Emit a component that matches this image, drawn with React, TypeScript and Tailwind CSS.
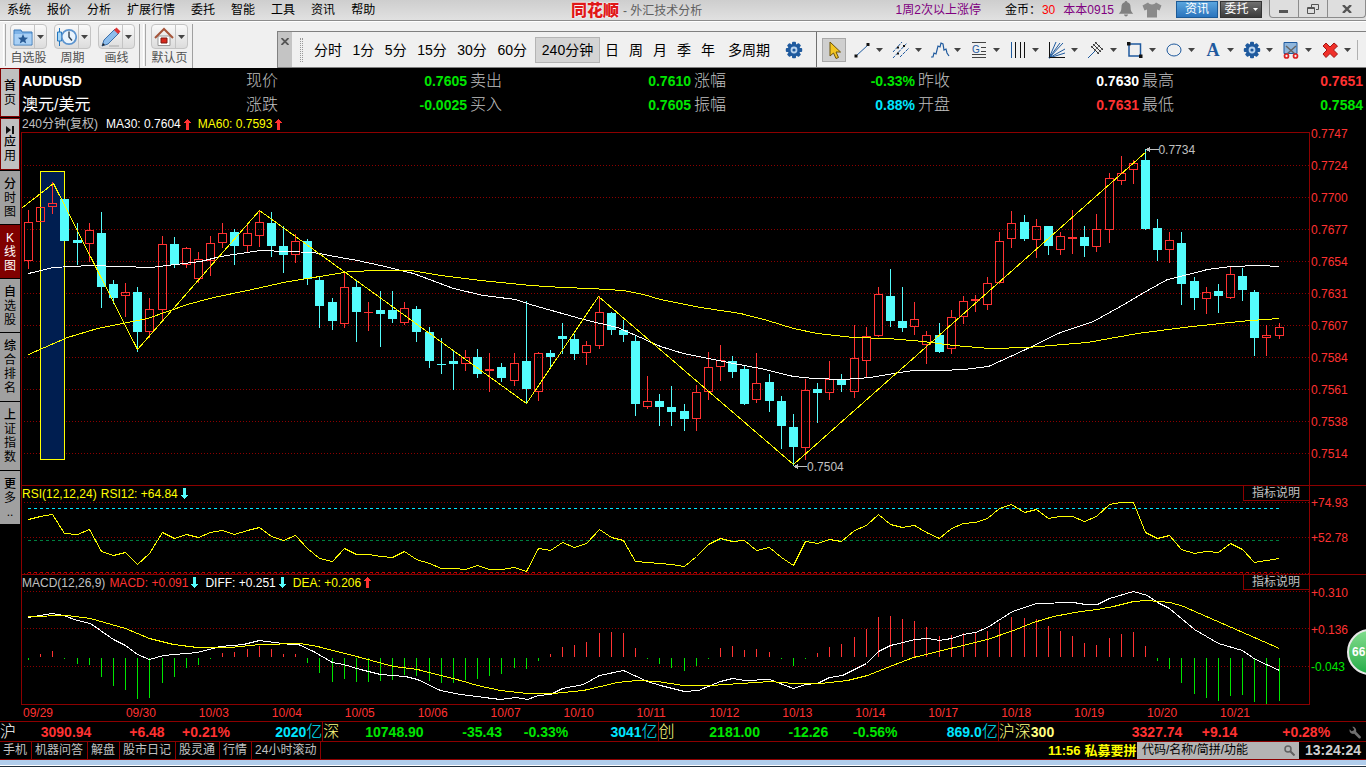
import type { ReactNode } from 'react';

// high, body top, body bottom, low, rising (1) or falling (0)
const CANDLES = [
  [78, 90, 129, 137, 1], [75, 75, 90, 90, 1], [50, 71, 75, 82, 1], [67, 67, 109, 109, 0], [91, 108, 111, 133, 0],
  [91, 98, 112, 130, 1], [80, 101, 155, 176, 0], [148, 152, 166, 172, 0], [151, 160, 164, 185, 1], [155, 160, 200, 220, 0],
  [166, 177, 200, 206, 1], [104, 112, 178, 188, 1], [105, 112, 133, 136, 0], [115, 116, 133, 136, 1], [120, 127, 147, 151, 1],
  [104, 111, 129, 144, 1], [91, 101, 111, 116, 1], [97, 100, 114, 133, 0], [93, 101, 114, 121, 1], [78, 90, 104, 115, 1],
  [80, 91, 114, 125, 0], [94, 114, 123, 141, 0], [102, 109, 123, 131, 1], [107, 109, 147, 153, 0], [144, 148, 174, 196, 0],
  [166, 170, 189, 198, 0], [140, 155, 192, 196, 1], [148, 155, 180, 210, 0], [170, 180, 181, 199, 1], [159, 178, 182, 215, 0],
  [159, 178, 187, 191, 0], [170, 176, 191, 193, 1], [174, 177, 200, 210, 0], [195, 200, 229, 236, 0], [206, 232, 233, 242, 0],
  [218, 229, 232, 258, 0], [218, 225, 232, 239, 1], [217, 225, 242, 246, 0], [221, 237, 239, 260, 1], [231, 235, 246, 250, 0],
  [221, 231, 249, 254, 1], [169, 229, 257, 271, 0], [220, 221, 260, 269, 1], [218, 221, 225, 236, 0], [191, 204, 207, 222, 0],
  [202, 207, 222, 228, 0], [209, 213, 221, 233, 1], [164, 180, 214, 217, 1], [180, 181, 198, 203, 0], [188, 198, 203, 210, 0],
  [204, 209, 272, 284, 0], [244, 269, 275, 277, 1], [262, 269, 275, 294, 0], [254, 275, 280, 294, 0], [272, 279, 287, 299, 0],
  [253, 260, 287, 299, 1], [220, 235, 260, 268, 1], [213, 228, 235, 249, 1], [224, 229, 240, 246, 0], [234, 237, 272, 273, 0],
  [221, 251, 268, 271, 1], [242, 250, 269, 280, 0], [264, 269, 294, 317, 0], [282, 295, 315, 334, 0], [247, 258, 316, 328, 1],
  [251, 257, 261, 291, 0], [229, 247, 261, 268, 1], [242, 247, 253, 260, 0], [193, 226, 260, 266, 1], [195, 204, 229, 245, 1],
  [155, 162, 204, 205, 1], [137, 164, 189, 195, 0], [155, 189, 196, 200, 0], [170, 187, 195, 203, 1], [199, 203, 213, 232, 1],
  [191, 203, 220, 221, 0], [178, 185, 217, 222, 1], [164, 169, 185, 192, 1], [163, 167, 169, 180, 1], [145, 151, 173, 178, 1],
  [100, 109, 151, 152, 1], [79, 91, 107, 116, 1], [83, 90, 107, 109, 0], [87, 94, 108, 126, 1], [94, 94, 114, 123, 0],
  [100, 104, 118, 123, 1], [78, 105, 107, 122, 1], [94, 105, 114, 125, 0], [82, 97, 115, 120, 1], [41, 46, 98, 111, 1],
  [24, 41, 49, 53, 1], [28, 31, 38, 52, 1], [17, 28, 97, 98, 0], [87, 96, 118, 129, 0], [100, 108, 118, 131, 1],
  [100, 111, 152, 173, 0], [145, 149, 166, 178, 0], [155, 160, 167, 182, 1], [152, 159, 164, 181, 0], [134, 142, 166, 167, 1],
  [136, 144, 158, 169, 0], [158, 160, 206, 224, 0], [193, 203, 206, 224, 1], [191, 195, 204, 207, 1],
];

const MA30 =
  '6,141 31,135 68,133 128,135 178,129 198,124 238,118 291,120 318,125 335,128 358,133 391,141 431,156 461,163 493,167 508,172 561,187 595,195 618,205 638,214 661,221 711,231 738,236 771,244 791,246 821,247 848,245 871,241 891,238 918,238 942,237 966,234 1001,218 1038,200 1071,189 1098,174 1125,158 1145,147 1158,144 1185,137 1208,134 1238,133 1257,134';
const MA60 =
  '6,222 45,205 75,196 125,186 165,172 191,165 225,158 261,150 291,145 328,139 355,138 388,138 418,143 458,148 508,153 541,155 568,156 601,158 621,162 638,167 678,175 718,181 745,188 771,196 795,201 831,205 865,206 901,209 931,213 968,216 1005,215 1065,210 1115,201 1161,195 1198,191 1228,188 1257,186';
const ZIGZAG = '0,75 31,51 115,217 237,78 504,271 576,164 771,332 1124,19';

const RSI = [
  17, 14, 12, 31, 32, 27, 49, 53, 50, 62, 51, 30, 36, 32, 35, 30, 28, 32, 28, 25, 34, 38, 33, 46, 56, 59, 46, 52, 52, 54,
  55, 49, 57, 61, 66, 66, 67, 63, 67, 67, 65, 69, 46, 48, 40, 45, 41, 27, 35, 38, 59, 60, 61, 62, 64, 54, 42, 36, 39, 38,
  48, 45, 55, 63, 39, 41, 37, 39, 28, 23, 12, 22, 25, 23, 30, 36, 26, 21, 20, 16, 6, 2, 10, 7, 16, 14, 14, 19, 14, 2, 0,
  0, 30, 36, 33, 47, 51, 49, 50, 41, 47, 60, 58, 56,
];

const MACD = [
  -2, 3, 6, -1, -6, -7, -19, -28, -32, -41, -40, -25, -19, -10, -7, -1, 4, 5, 8, 11, 8, 3, 3, -5, -15, -24, -21, -24, -24,
  -23, -22, -17, -18, -23, -25, -25, -22, -21, -18, -16, -10, -11, -3, 3, 10, 12, 15, 24, 25, 24, 9, -1, -6, -10, -13, -8,
  -1, 9, 11, 7, 8, 5, -1, -8, -1, 4, 10, 13, 20, 28, 40, 41, 38, 36, 30, 21, 22, 24, 24, 26, 34, 40, 39, 38, 31, 26, 21,
  14, 12, 19, 23, 25, 11, -3, -11, -25, -36, -40, -43, -38, -37, -44, -46, -43,
];
const DIFF =
  '6,26 30,22 41,24 55,29 68,32 78,39 91,48 103,54 115,63 127,68 141,64 175,61 198,55 221,53 237,49 268,53 276,53 291,60 310,71 321,73 338,78 358,83 383,85 395,88 418,99 438,103 478,108 493,106 505,108 516,104 528,103 540,97 561,93 577,84 601,79 625,90 638,94 662,100 676,99 698,90 710,87 723,89 747,88 771,97 783,93 795,92 807,86 820,84 844,72 856,60 868,54 893,48 905,47 917,49 929,47 941,43 953,41 965,36 990,20 1014,12 1051,11 1063,13 1075,13 1087,7 1111,0 1125,4 1135,11 1147,17 1172,38 1196,52 1220,59 1233,68 1257,79';
const DEA =
  '6,25 45,24 68,27 103,37 127,47 151,53 175,56 208,56 238,53 278,52 295,55 338,66 371,75 395,78 438,89 455,94 478,99 505,102 531,102 561,99 595,91 615,89 635,90 661,94 688,94 718,92 748,90 771,92 798,92 825,89 845,84 865,76 891,66 928,57 965,48 991,39 1011,31 1031,25 1058,20 1075,18 1091,15 1111,10 1125,9 1148,11 1161,15 1257,57';

const RED = '#ff3232';
const CYAN = '#54fcfc';

const barX = (i: number) => Math.floor(6.45 + 12.142 * i);

const MENUS = ['系统', '报价', '分析', '扩展行情', '委托', '智能', '工具', '资讯', '帮助'];
const PRICES = ['0.7747', '0.7724', '0.7700', '0.7677', '0.7654', '0.7631', '0.7607', '0.7584', '0.7561', '0.7538', '0.7514'];
const DATES = [
  '09/30', '10/03', '10/04', '10/05', '10/06', '10/07', '10/10', '10/11', '10/12', '10/13', '10/14', '10/17', '10/18',
  '10/19', '10/20',
];

const QUOTES = [
  { label: '现价', value: '0.7605', color: 'text-[#00e600]' },
  { label: '涨跌', value: '-0.0025', color: 'text-[#00e600]' },
  { label: '卖出', value: '0.7610', color: 'text-[#00e600]' },
  { label: '买入', value: '0.7605', color: 'text-[#00e600]' },
  { label: '涨幅', value: '-0.33%', color: 'text-[#00e600]' },
  { label: '振幅', value: '0.88%', color: 'text-[#00e6ff]' },
  { label: '昨收', value: '0.7630', color: 'text-white' },
  { label: '开盘', value: '0.7631', color: 'text-[#ff3232]' },
  { label: '最高', value: '0.7651', color: 'text-[#ff3232]' },
  { label: '最低', value: '0.7584', color: 'text-[#00e600]' },
];

const INDEXES = [
  {
    name: '沪', nameColor: 'text-white', color: 'text-[#ff3232]', values: ['3090.94', '+6.48', '+0.21%'], volume: '2020',
    grow: 'flex-[323_1_0%] border-r', cols: 'grid-cols-[91fr_73fr_65fr_92fr]',
  },
  {
    name: '深', nameColor: 'text-[#ffff80]', color: 'text-[#00e600]', values: ['10748.90', '-35.43', '-0.33%'], volume: '3041',
    grow: 'flex-[335_1_0%] border-r', cols: 'grid-cols-[100fr_78fr_66fr_89fr]',
  },
  {
    name: '创', nameColor: 'text-[#ffff80]', color: 'text-[#00e600]', values: ['2181.00', '-12.26', '-0.56%'], volume: '869.0',
    grow: 'flex-[340_1_0%] border-r', cols: 'grid-cols-[101fr_68fr_69fr_100fr]',
  },
];

function Icon({ children, className = 'size-5' }: { children: ReactNode; className?: string }) {
  return (
    <svg viewBox="0 0 20 20" fill="none" className={`shrink-0 ${className}`} aria-hidden="true">
      {children}
    </svg>
  );
}

function Caret() {
  return (
    <svg viewBox="0 0 7 4" className="h-1 w-[7px] shrink-0" aria-hidden="true">
      <path d="M0 0h7L3.5 4z" fill="#444" />
    </svg>
  );
}

function Gear() {
  return (
    <Icon>
      <g fill="#1f5a9e">
        <circle cx="10" cy="10" r="6.3" />
        {[0, 45, 90, 135].map((a) => (
          <rect key={a} x="8" y="1.8" width="4" height="16.4" rx="1" transform={`rotate(${a} 10 10)`} />
        ))}
      </g>
      <circle cx="10" cy="10" r="3.4" fill="#b9d3ee" />
      <circle cx="10" cy="10" r="1.6" fill="#1f5a9e" />
    </Icon>
  );
}

function Arrow({ up }: { up?: boolean }) {
  return (
    <svg viewBox="0 0 7 11" className="mx-[3px] h-[11px] w-[7px] shrink-0" shapeRendering="crispEdges" aria-hidden="true">
      {up ? (
        <path d="M3 0h1v1h1v1h1v1h1v1H5v7H2V4H0V3h1V2h1V1h1z" fill={RED} />
      ) : (
        <path d="M2 0h3v7h2v1H6v1H5v1H4v1H3v-1H2V9H1V8H0V7h2z" fill={CYAN} />
      )}
    </svg>
  );
}

function TitleBar() {
  return (
    <header className="flex h-[22px] items-start border-b border-white bg-linear-to-b from-[#cecece] to-[#e2e2e2] shadow-[inset_0_-1px_0_#8c8c8c]">
      <nav className="flex w-[571px] shrink-0 gap-4 pl-[7px] leading-[21px] text-black">
        {MENUS.map((m) => (
          <button key={m}>{m}</button>
        ))}
      </nav>
      <h1 className="flex items-center leading-[20px] text-[#606060]">
        <span className="text-base leading-[20px] font-black text-[#e01818] [text-shadow:0_0_2px_#fff,0_0_2px_#fff]">同花顺</span>
        <span className="pl-1 leading-[22px]">- 外汇技术分析</span>
      </h1>
      <div className="ml-auto flex items-start leading-[21px] text-[#800080]">
        <a href="#promo" className="mr-6">1周2次以上涨停</a>
        <span className="mr-px text-black">金币：</span>
        <span className="mr-2 text-[#ff0000]">30</span>
        <a href="#user" className="mr-1">本本0915</a>
        <button aria-label="提醒" className="mr-2">
          <Icon className="mt-px size-4">
            <path d="M10 0c1 0 1.700.700 1.700 1.700 3 .8 4 3.300 4 6.300 0 4 1.300 5.500 3.300 8H1c2-2.500 3.300-4 3.300-8 0-3 1-5.500 4-6.300C8.300.700 9 0 10 0zM7.500 17h5c0 3-5 3-5 0z" fill="#808080" />
          </Icon>
        </button>
        <button aria-label="换肤" className="mr-[14px]">
          <Icon className="size-5">
            <path d="M6 2.500c1.500 2.500 6.500 2.500 8 0l5.500 3-2 5-2.500-1v8H5v-8l-2.500 1-2-5z" fill="#8a8a8a" />
          </Icon>
        </button>
        <button className="mt-px mr-[2px] h-[17px] w-[42px] border border-[#1c5a96] bg-linear-to-b from-[#5aa5de] to-[#2a74bd] leading-[15px] text-white">资讯</button>
        <button className="mt-px mr-[7px] flex h-[17px] w-[42px] items-center justify-center gap-1 border border-[#333] bg-linear-to-b from-[#707070] to-[#3c3c3c] leading-[15px] text-white">
          委托
          <svg viewBox="0 0 5 3" className="h-[3px] w-[5px]" aria-hidden="true"><path d="M0 0h5L2.500 3z" fill="#fff" /></svg>
        </button>
        <div className="flex h-[18px] w-[97px] divide-x divide-[#8c8c8c] rounded-b-sm border border-t-0 border-[#8c8c8c] bg-[#dedede]">
          <button aria-label="最小化" className="flex flex-1 items-center justify-center">
            <svg viewBox="0 0 10 10" className="size-[10px]"><path d="M0 6h9v3H0z" fill="#555" /></svg>
          </button>
          <button aria-label="还原" className="flex flex-1 items-center justify-center">
            <svg viewBox="0 0 12 10" className="h-[10px] w-3" fill="none" stroke="#555"><path d="M4.500 3V.500h7v5H9M.500 3.500h7v6h-7zM.500 4.500h7" /></svg>
          </button>
          <button aria-label="关闭" className="flex flex-[1.3] items-center justify-center">
            <svg viewBox="0 0 10 8" className="h-2 w-[10px]"><path d="M1 0l8 8M9 0L1 8" stroke="#555" strokeWidth="2.400" /></svg>
          </button>
        </div>
      </div>
    </header>
  );
}

const SHORTCUTS = [
  {
    label: '自选股',
    icon: (
      <Icon>
        <path d="M1 3h7l1 2h10v13H1z" fill="#7fb4e8" stroke="#3a78b8" />
        <path d="M1.500 7h17v10.500h-17z" fill="#a9d0f5" />
        <path d="M10 7l1.500 3.500 3.500.200-2.700 2.300.900 3.500-3.200-2-3.200 2 .900-3.500L5 10.700l3.500-.200z" fill="#285a94" />
      </Icon>
    ),
  },
  {
    label: '周期',
    icon: (
      <Icon>
        <path d="M2.500 1v18" stroke="#2277c0" />
        <path d="M.500 5h4v9h-4z" fill="#a9d6f5" stroke="#2277c0" />
        <circle cx="12" cy="10" r="7.200" fill="#eaf4fd" stroke="#5c94cf" strokeWidth="1.700" />
        <path d="M12 4.500V10l3 3.500" stroke="#345" strokeWidth="1.400" />
      </Icon>
    ),
  },
  {
    label: '画线',
    icon: (
      <Icon>
        <path d="M1 19l2-6L14 2l4 4L7 17z" fill="#8dbdec" stroke="#3c6fa8" />
        <path d="M13 3l2.500-2.500 4 4L17 7z" fill="#d33" />
        <path d="M1 19l1-3 2 2z" fill="#222" />
        <path d="M8 19h10" stroke="#bbb" strokeWidth="1.500" />
      </Icon>
    ),
  },
];

function Shortcut({ label, icon }: { label: string; icon: ReactNode }) {
  return (
    <div className="flex w-[37px] flex-col items-center text-[#505050]">
      <button aria-label={label} className="flex h-[25px] w-[37px] items-center rounded-sm border border-[#c4c4c4] bg-linear-to-b from-[#fafafa] to-[#dcdcdc]">
        <span className="flex flex-1 justify-center">{icon}</span>
        <span className="flex h-full w-3 items-center justify-center border-l border-[#c4c4c4]"><Caret /></span>
      </button>
      <span className="leading-[18px] whitespace-nowrap">{label}</span>
    </div>
  );
}

const DRAW_TOOLS = [
  {
    label: '线段',
    icon: <><path d="M4 16L16 5" stroke="#1f5a9e" /><path d="M2.500 14.500h3v3h-3zM14.500 3h3v3h-3z" fill="#111" /></>,
  },
  {
    label: '平行线',
    icon: <><path d="M2 12L11 2M2 18L16 3M9 17l9-9" stroke="#1f5a9e" strokeDasharray="3 1" /><path d="M6 12.500h2v2H6zM12 5h2v2h-2zM6 6.500h2v2H6z" fill="#111" /></>,
  },
  { label: '波浪', icon: <path d="M1 17h2l1-4 2 1 2-8 2 1 1-4 2 1 1 6 2-1 1 4 2 3" stroke="#1f5a9e" strokeWidth="1.200" /> },
  {
    label: '黄金分割',
    icon: <><path d="M3 2.500h14M12 7.500h5M12 11.500h5M3 14.500h14M3 17.500h14" stroke="#444" /><text x="3" y="13" fontSize="10" fill="#1f5a9e" fontFamily="Liberation Sans">G</text></>,
  },
  { label: '周期线', icon: <><path d="M3.500 2v16" stroke="#1f5a9e" /><path d="M7.500 2v16M12.500 2v16M16.500 2v16" stroke="#111" /></> },
  { label: '江恩角度', icon: <><path d="M2 18L9 2M2 18L16 3M2 18L18 9M2 18l11-15M2 18l16-5" stroke="#1f5a9e" /><path d="M2.500 2v15.500H18" stroke="#111" /></> },
  { label: '音叉', icon: <><path d="M2 18l7-7" stroke="#1f5a9e" /><path d="M5 6l8 8M7 4l8 8M9 2l8 8" stroke="#333" /><path d="M5 8l6-6M8 11l6-6M11 14l6-6" stroke="#777" /></> },
  { label: '矩形', icon: <><path d="M4 4h11.500v12H4z" stroke="#1f5a9e" strokeWidth="1.500" /><path d="M2 2h3.500v3.500H2zM14 14.500h3.500V18H14z" fill="#111" /></> },
  { label: '圆', icon: <ellipse cx="10" cy="10" rx="7" ry="6" stroke="#1f5a9e" /> },
];

function DrawTool({ label, children }: { label: string; children: ReactNode }) {
  return (
    <button aria-label={label} className="flex w-[39px] items-center gap-1 pl-[2px]">
      {children}
      <Caret />
    </button>
  );
}

function Toolbar() {
  const periods = ['分时', '1分', '5分', '15分', '30分', '60分'];
  return (
    <div className="flex h-[46px] items-start bg-[#f0f0f0] pt-[2px]">
      <div className="flex h-[44px] gap-[7px] border-r border-[#a0a0a0] pr-1 pl-[3px]">
        <i className="mr-[-3px] h-[42px] w-[3px] border-x border-x-[#a8a8a8] border-l-white" />
        {SHORTCUTS.map((s) => (
          <Shortcut key={s.label} {...s} />
        ))}
      </div>
      <div className="flex h-[44px] gap-[5px] border-r border-[#a0a0a0] pr-1 pl-[3px]">
        <i className="h-[42px] w-[3px] border-x border-x-[#a8a8a8] border-l-white" />
        <Shortcut
          label="默认页"
          icon={
            <Icon>
              <path d="M4 9h12v9.500H4z" fill="#fff" stroke="#999" />
              <path d="M1 11L10 2l9 9" stroke="#a5553a" strokeWidth="2" />
              <path d="M7 11h6v5H7z" fill="#d8281c" stroke="#7d1a12" />
            </Icon>
          }
        />
      </div>
      <div className="mt-[7px] ml-auto flex h-[37px] w-[1089px] shrink-0 items-center border border-r-0 border-[#808080] text-sm text-black">
        <button aria-label="收起" className="flex h-full w-[14px] justify-center bg-[#c4c4c4] pt-[6px]">
          <svg viewBox="0 0 8 7" className="h-[7px] w-2"><path d="M.500 0l7 7M7.500 0l-7 7" stroke="#555" strokeWidth="1.800" /></svg>
        </button>
        <i className="mx-2 h-6 w-[3px] border-x border-dotted border-[#999]" />
        <div className="flex w-[216px] justify-between pl-[3px]">
          {periods.map((p) => (
            <button key={p}>{p}</button>
          ))}
        </div>
        <button className="mr-[5px] ml-[8px] h-[26px] w-[65px] border border-[#b4b4b4] bg-[#d4d4d4]">240分钟</button>
        {['日', '周', '月', '季', '年'].map((p) => (
          <button key={p} className="w-6 text-left">{p}</button>
        ))}
        <button className="ml-[3px]">多周期</button>
        <button aria-label="周期设置" className="ml-[14px]"><Gear /></button>
        <div className="ml-auto flex h-full w-[550px] items-center border-l border-[#707070] pl-[5px]">
          <button aria-label="选择" className="mr-1 flex size-6 items-center justify-center border border-[#a8a8a8] bg-[#cfcfcf]">
            <Icon>
              <path d="M6 2v14l3.500-3 2.500 5.500 2.500-1-2.500-5.500h4.500z" fill="#f3c623" stroke="#6b5208" />
            </Icon>
          </button>
          {DRAW_TOOLS.map((t) => (
            <DrawTool key={t.label} label={t.label}><Icon>{t.icon}</Icon></DrawTool>
          ))}
          <DrawTool label="文字"><span className="w-5 text-center font-['Liberation_Serif'] text-lg font-bold text-[#1f5a9e]">A</span></DrawTool>
          <DrawTool label="设置"><Gear /></DrawTool>
          <DrawTool label="截图">
            <Icon>
              <path d="M3 2.500h13v11H3z" fill="#8fb6dc" stroke="#1f5a9e" />
              <path d="M5 6l9 8M15 6l-9 8" stroke="#666" strokeWidth="1.500" />
              <circle cx="5.500" cy="16" r="2" stroke="#d22" strokeWidth="1.700" />
              <circle cx="14.500" cy="16" r="2" stroke="#d22" strokeWidth="1.700" />
            </Icon>
          </DrawTool>
          <DrawTool label="删除">
            <Icon>
              <path d="M3 6l3-3 4 4 4-4 3.500 3-4 4 4 4-3.500 3.500-4-4-4 4L3 14l4-4z" fill="#f0302a" stroke="#a31512" />
            </Icon>
          </DrawTool>
          <i className="h-5 w-px bg-[#b0b0b0]" />
        </div>
      </div>
    </div>
  );
}

const TABS = [
  { label: '首页', look: 'h-[49px] border border-[#800000] bg-[#c0c0c0] text-black' },
  { label: '应用', look: 'h-[52px] border border-[#800000] bg-[#c0c0c0] text-black' },
  { label: '分时图', look: 'h-[53px] bg-[#a0a0a0] text-black' },
  { label: 'K线图', look: 'h-[53px] bg-[#800000] text-white' },
  { label: '自选股', look: 'h-[53px] bg-[#a0a0a0] text-black' },
  { label: '综合排名', look: 'h-[68px] bg-[#a0a0a0] text-black' },
  { label: '上证指数', look: 'h-[68px] bg-[#a0a0a0] text-black' },
  { label: '更多..', look: 'h-[53px] bg-[#a0a0a0] text-black' },
];

function SideTabs() {
  return (
    <aside className="flex w-[21px] shrink-0 flex-col gap-px pr-px">
      {TABS.map((t) => (
        <button key={t.label} className={`flex flex-col items-center justify-center overflow-hidden leading-[14px] ${t.look}`}>
          {t.label === '应用' && (
            <svg viewBox="0 0 8 8" className="mb-px size-2" aria-hidden="true"><path d="M0 0l5 4-5 4zM6 0h2v8H6z" fill="#111" /></svg>
          )}
          <span className="w-[13px] [line-break:anywhere] first-letter:font-medium">{t.label}</span>
        </button>
      ))}
    </aside>
  );
}

function QuoteHeader() {
  return (
    <div className="grid h-12 grid-flow-col grid-cols-6 grid-rows-2 pl-px text-base leading-6">
      <div className="pt-px text-sm leading-6 font-bold text-white">AUDUSD</div>
      <div className="pt-px text-white">澳元/美元</div>
      {QUOTES.map((q) => (
        <div key={q.label} className="flex justify-between pt-px pr-[3px] text-[#c0c0c0]">
          <span className="font-light">{q.label}</span>
          <b className={`text-sm leading-6 ${q.color}`}>{q.value}</b>
        </div>
      ))}
    </div>
  );
}

function Grid({ rows }: { rows: number[] }) {
  return (
    <g fill="none" stroke="#8c0000" strokeDasharray="1 2">
      {rows.map((y) => (
        <path key={y} d={`M2 ${y + 0.5}H1287`} />
      ))}
    </g>
  );
}

function PricePanel() {
  return (
    <section className="flex">
      <div className="min-w-0 flex-1">
        <div className="flex h-4 items-center pl-px leading-4 text-[#c0c0c0]">
          240分钟(复权)
          <span className="ml-2 text-white">MA30: 0.7604</span>
          <Arrow up />
          <span className="ml-1 text-[#ffff00]">MA60: 0.7593</span>
          <Arrow up />
        </div>
        <div className="relative border-x border-[#8c0000]">
          <svg viewBox="0 0 1287 353" preserveAspectRatio="none" shapeRendering="crispEdges" className="block h-[353px] w-full">
            <path d="M0 .5H1287" stroke="#8c0000" />
            <Grid rows={[33, 65, 97, 129, 161, 193, 225, 257, 289, 321]} />
            <rect x="18.5" y="39.5" width="24" height="288" fill="#001e50" stroke="#ffff00" />
            {CANDLES.map(([high, top, bottom, low, up], i) => {
              const x = barX(i);
              const color = up ? RED : CYAN;
              return (
                <g key={i} fill={color}>
                  <rect x={x} y={high} width="1" height={top - high} />
                  <rect x={x} y={bottom} width="1" height={low - bottom} />
                  {up && bottom - top > 2 ? (
                    <rect x={x - 3.5} y={top + 0.5} width="8" height={bottom - top - 1} fill="none" stroke={color} />
                  ) : (
                    <rect x={x - 4} y={top} width="9" height={bottom - top} />
                  )}
                </g>
              );
            })}
            <g transform="translate(0.500 0.500)" fill="none">
              <polyline points={MA30} stroke="#fff" />
              <polyline points={MA60} stroke="#ffff00" />
              <polyline points={ZIGZAG} stroke="#ffff00" />
              <path d="M1124 17h12M1124 17l3-2v4zM772 334h12M772 334l3-2v4z" stroke="#c0c0c0" />
            </g>
          </svg>
          <span className="absolute top-[10px] left-[88.3%] leading-4 text-[#c0c0c0]">0.7734</span>
          <span className="absolute top-[327px] left-[61%] leading-4 text-[#c0c0c0]">0.7504</span>
        </div>
      </div>
      <ol className="w-14 shrink-0 pt-[2px] pl-px leading-[32px] text-[#ff3232]">
        {PRICES.map((p) => (
          <li key={p}>{p}</li>
        ))}
      </ol>
    </section>
  );
}

function HelpButton() {
  return <button className="ml-auto h-[15px] w-[66px] border-b border-l border-[#8c0000] pl-2 text-left leading-[14px] text-[#c0c0c0]">指标说明</button>;
}

function RsiPanel() {
  return (
    <section className="flex border-t border-[#8c0000]">
      <div className="min-w-0 flex-1 border-x border-[#8c0000]">
        <div className="flex h-4 items-start leading-4 text-[#ffff00]">
          RSI(12,12,24)<span className="ml-1">RSI12: +64.84</span>
          <span className="pt-[2px]"><Arrow /></span>
          <HelpButton />
        </div>
        <svg viewBox="0 0 1287 72" preserveAspectRatio="none" shapeRendering="crispEdges" className="block h-[72px] w-full">
          <Grid rows={[0, 35, 71]} />
          <g fill="none" strokeDasharray="3 3">
            <path d="M6 6.500H1257" stroke="#00e6ff" />
            <path d="M6 38.500H1257" stroke="#008040" />
            <path d="M6 70.500H1257" stroke="#c00000" />
          </g>
          <g transform="translate(0.500 0.500)" fill="none">
            <polyline points={RSI.map((y, i) => `${barX(i)},${y}`).join(' ')} stroke="#ffff00" />
          </g>
        </svg>
      </div>
      <ol className="w-14 shrink-0 pl-px leading-[35px] text-[#ff3232]">
        <li>+74.93</li>
        <li>+52.78</li>
      </ol>
    </section>
  );
}

function MacdPanel() {
  return (
    <section className="flex border-t border-[#8c0000]">
      <div className="min-w-0 flex-1 border-x border-b border-[#8c0000]">
        <div className="flex h-4 items-start leading-4 text-[#c0c0c0]">
          MACD(12,26,9)
          <span className="ml-1 text-[#ff3232]">MACD: +0.091</span>
          <span className="pt-[2px]"><Arrow /></span>
          <span className="ml-1 text-white">DIFF: +0.251</span>
          <span className="pt-[2px]"><Arrow /></span>
          <span className="ml-1 text-[#ffff00]">DEA: +0.206</span>
          <span className="pt-[2px]"><Arrow up /></span>
          <HelpButton />
        </div>
        <svg viewBox="0 0 1287 113" preserveAspectRatio="none" shapeRendering="crispEdges" className="block h-[113px] w-full">
          <Grid rows={[0, 37, 75]} />
          {MACD.map((v, i) => (
            <rect key={i} x={barX(i)} y={v > 0 ? 66 - v : 67} width="1" height={Math.abs(v)} fill={v > 0 ? RED : '#00e600'} />
          ))}
          <g transform="translate(0.500 0.500)" fill="none">
            <polyline points={DIFF} stroke="#fff" />
            <polyline points={DEA} stroke="#ffff00" />
          </g>
        </svg>
      </div>
      <div className="relative w-14 shrink-0 overflow-hidden">
        <ol className="pl-px leading-[37px] text-[#ff3232]">
          <li>+0.310</li>
          <li>+0.136</li>
          <li className="text-[#00e600]">-0.043</li>
        </ol>
        <button className="absolute top-[54px] -right-[27px] size-[46px] rounded-full border-2 border-[#e8e8e8] bg-linear-to-b from-[#7fdc8c] to-[#1fae49] pl-[3px] text-left font-bold text-white">66</button>
      </div>
    </section>
  );
}

function DateAxis() {
  return (
    <div className="mr-14 flex h-4 pl-[2px] leading-4 text-[#ff3232]">
      <span className="flex-[103_1_0%]">09/29</span>
      {DATES.map((d) => (
        <span key={d} className="flex-[73_1_0%]">{d}</span>
      ))}
      <span className="flex-[90_1_0%]">10/21</span>
    </div>
  );
}

function IndexBar() {
  return (
    <div className="flex h-5 border-t border-[#8c0000] text-sm leading-[20px] font-bold whitespace-nowrap">
      {INDEXES.map((x) => (
        <div key={x.name} className={`grid border-[#8c0000] text-right ${x.grow} ${x.cols} ${x.color}`}>
          <div className="flex justify-between">
            <span className={`text-base leading-[20px] font-light ${x.nameColor}`}>{x.name}</span>
            {x.values[0]}
          </div>
          <span>{x.values[1]}</span>
          <span>{x.values[2]}</span>
          <span className="text-[#00e6ff]">{x.volume}<span className="text-base leading-[19px] font-light">亿</span></span>
        </div>
      ))}
      <div className="grid flex-[368_1_0%] grid-cols-[184fr_55fr_93fr_36fr] text-right text-[#ff3232]">
        <div className="flex justify-between">
          <span className="text-[#ffff80]"><span className="text-base leading-[19px] font-light">沪深</span>300</span>
          3327.74
        </div>
        <span>+9.14</span>
        <span>+0.28%</span>
        <button aria-label="设置指数" className="flex items-center justify-end pr-1">
          <Icon className="size-[13px]">
            <path d="M5 1l3 4-1 2-3 1-3-3c-1 4 2 8 7 7l7 7c2 1 4-1 3-3l-7-7c1-5-2-8-6-8z" fill="#707070" />
          </Icon>
        </button>
      </div>
    </div>
  );
}

function StatusBar() {
  return (
    <footer className="flex h-[19px] border-y border-[#8c0000] leading-[17px] text-[#c0c0c0]">
      {['手机', '机器问答', '解盘', '股市日记', '股灵通', '行情', '24小时滚动'].map((l) => (
        <button key={l} className="shrink-0 border-r border-[#8c0000] pr-1 pl-[3px]">{l}</button>
      ))}
      <div className="ml-auto flex w-[89px] gap-1 overflow-hidden font-bold whitespace-nowrap text-[#ffff00]">
        <span className="text-[13px]">11:56</span>
        <span className="text-[13px]">私募要拼</span>
      </div>
      <label className="flex w-[162px] items-center bg-[#b4b4b4] pr-1 pl-[5px] text-black">
        <input aria-label="搜索" placeholder="代码/名称/简拼/功能" className="min-w-0 flex-1 outline-none placeholder:text-black" />
        <svg viewBox="0 0 11 11" className="size-[11px]" fill="none" stroke="#606060" strokeWidth="1.500" aria-hidden="true">
          <circle cx="4" cy="4" r="3" /><path d="M6 6l4.500 4.500" strokeWidth="2" />
        </svg>
      </label>
      <time className="w-[67px] pl-[6px] text-sm leading-[17px] font-bold text-[#d0d0d0]">13:24:24</time>
    </footer>
  );
}

export default function App() {
  return (
    <div className="min-w-[1366px] bg-black font-['Liberation_Sans','Noto_Sans_CJK_SC',sans-serif] text-xs">
      <TitleBar />
      <Toolbar />
      <main className="flex">
        <SideTabs />
        <div className="min-w-0 flex-1">
          <QuoteHeader />
          <PricePanel />
          <RsiPanel />
          <MacdPanel />
          <DateAxis />
        </div>
      </main>
      <IndexBar />
      <StatusBar />
      <div className="h-[7px] border-b border-[#203040] bg-[#b0cdec] shadow-[inset_0_-1px_0_#fff]" />
    </div>
  );
}
